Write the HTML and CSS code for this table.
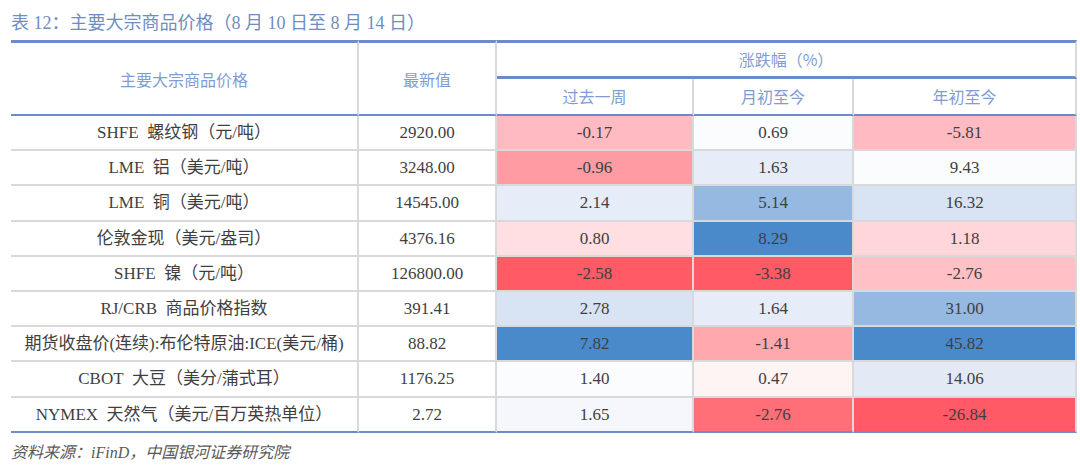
FILE: index.html
```html
<!DOCTYPE html>
<html lang="zh-CN">
<head>
<meta charset="utf-8">
<title>表12 主要大宗商品价格</title>
<link rel="stylesheet" href="styles.css">
</head>
<body>
<div class="page">
  <div class="caption">表 12：主要大宗商品价格（8 月 10 日至 8 月 14 日）</div>
  <table class="grid">
    <colgroup>
      <col class="c-name">
      <col class="c-last">
      <col class="c-wk">
      <col class="c-mtd">
      <col class="c-ytd">
    </colgroup>
    <thead>
      <tr>
        <th rowspan="2" class="hd hd-side">主要大宗商品价格</th>
        <th rowspan="2" class="hd hd-side">最新值</th>
        <th colspan="3" class="hd hd-group">涨跌幅（%）</th>
      </tr>
      <tr>
        <th class="hd hd-sub">过去一周</th>
        <th class="hd hd-sub">月初至今</th>
        <th class="hd hd-sub">年初至今</th>
      </tr>
    </thead>
    <tbody>
      <tr>
        <td class="name">SHFE&nbsp; 螺纹钢（元/吨）</td>
        <td>2920.00</td>
        <td class="n1b">-0.17</td>
        <td class="w">0.69</td>
        <td class="n1b">-5.81</td>
      </tr>
      <tr>
        <td class="name">LME&nbsp; 铝（美元/吨）</td>
        <td>3248.00</td>
        <td class="n2">-0.96</td>
        <td class="b1">1.63</td>
        <td class="w">9.43</td>
      </tr>
      <tr>
        <td class="name">LME&nbsp; 铜（美元/吨）</td>
        <td>14545.00</td>
        <td class="b1">2.14</td>
        <td class="b3">5.14</td>
        <td class="b2">16.32</td>
      </tr>
      <tr>
        <td class="name">伦敦金现（美元/盎司）</td>
        <td>4376.16</td>
        <td class="n0">0.80</td>
        <td class="b4">8.29</td>
        <td class="n0b">1.18</td>
      </tr>
      <tr>
        <td class="name">SHFE&nbsp; 镍（元/吨）</td>
        <td>126800.00</td>
        <td class="n3">-2.58</td>
        <td class="n3">-3.38</td>
        <td class="n1">-2.76</td>
      </tr>
      <tr>
        <td class="name">RJ/CRB&nbsp; 商品价格指数</td>
        <td>391.41</td>
        <td class="b2">2.78</td>
        <td class="b1">1.64</td>
        <td class="b3">31.00</td>
      </tr>
      <tr>
        <td class="name">期货收盘价(连续):布伦特原油:ICE(美元/桶)</td>
        <td>88.82</td>
        <td class="b4">7.82</td>
        <td class="n1c">-1.41</td>
        <td class="b4">45.82</td>
      </tr>
      <tr>
        <td class="name">CBOT&nbsp; 大豆（美分/蒲式耳）</td>
        <td>1176.25</td>
        <td class="w">1.40</td>
        <td class="n00">0.47</td>
        <td class="b1b">14.06</td>
      </tr>
      <tr class="last">
        <td class="name">NYMEX&nbsp; 天然气（美元/百万英热单位）</td>
        <td>2.72</td>
        <td class="w2">1.65</td>
        <td class="n2b">-2.76</td>
        <td class="n3">-26.84</td>
      </tr>
    </tbody>
  </table>
  <div class="source">资料来源：iFinD，中国银河证券研究院</div>
</div>
</body>
</html>
```
FILE: styles.css
```css
html, body {
  margin: 0;
  padding: 0;
  background: #ffffff;
}

.page {
  padding: 11px 0 0 11px;
  font-family: "Liberation Serif", "Noto Sans CJK SC", serif;
}

.caption {
  font-family: "Liberation Serif", "Noto Sans CJK SC", serif;
  font-size: 18px;
  line-height: 24px;
  color: #6f8dc3;
}

.grid {
  margin-top: 5px;
  width: 1066px;
  table-layout: fixed;
  border-collapse: separate;
  border-spacing: 0;
}

.c-name { width: 348px; }
.c-last { width: 138px; }
.c-wk   { width: 197px; }
.c-mtd  { width: 160px; }
.c-ytd  { width: 223px; }

.hd {
  font-family: "Noto Sans CJK SC", sans-serif;
  font-weight: 400;
  font-size: 16px;
  color: #7f9dd2;
  padding: 0;
  text-align: center;
  vertical-align: middle;
}

.hd-side {
  border-top: 3px solid #6b8cc6;
  border-bottom: 2px solid #6b8cc6;
  border-right: 2px solid #d9d9d9;
}

.hd-group {
  border-top: 3px solid #6b8cc6;
  border-bottom: 3px solid #6b8cc6;
  border-right: 2px solid #d9d9d9;
  height: 33px;
  line-height: 33px;
}

.hd-sub {
  border-bottom: 2px solid #6b8cc6;
  border-right: 2px solid #d9d9d9;
  height: 35px;
  line-height: 35px;
}

.grid td {
  padding: 0;
  height: 33.2px;
  line-height: 33px;
  font-size: 17px;
  color: #3f3f3f;
  text-align: center;
  white-space: nowrap;
  border-bottom: 2px solid #d9d9d9;
  border-right: 2px solid #d9d9d9;
}

.grid tr.last td {
  border-bottom: 2px solid #6b8cc6;
}

.source {
  margin-top: 9px;
  font-family: "Liberation Serif", "Noto Sans CJK SC", serif;
  font-style: italic;
  font-size: 16px;
  line-height: 22px;
  color: #595959;
}

/* heat-map shades */
.n3  { background: #ff5a66; }
.n2b { background: #ff6f78; }
.n2  { background: #ff9ca3; }
.n1c { background: #ffa9ae; }
.n1b { background: #ffbbc1; }
.n1  { background: #ffc1c6; }
.n0b { background: #ffd6da; }
.n0  { background: #ffdfe2; }
.n00 { background: #fff4f4; }
.w   { background: #fbfcfe; }
.w2  { background: #f5f7fc; }
.b1  { background: #e6ecf8; }
.b1b { background: #e3eaf6; }
.b2  { background: #d8e3f3; }
.b3  { background: #95b9e1; }
.b4  { background: #4a8acb; }
```
